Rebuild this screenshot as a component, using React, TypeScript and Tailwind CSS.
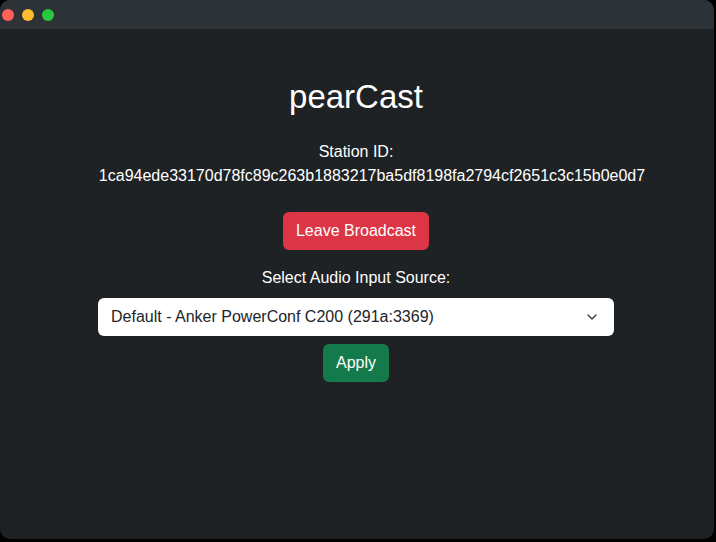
import { ChevronDown } from "lucide-react";

const stationId = "1ca94ede33170d78fc89c263b1883217ba5df8198fa2794cf2651c3c15b0e0d7";

const App = () => {
  return (
    <div className="w-[716px] h-[542px] bg-black font-['Liberation_Sans',Arial,sans-serif]">
      <div className="w-[714px] h-[539px] rounded-[10px] overflow-hidden bg-[#1f2225] flex flex-col">
        {/* title bar */}
        <div className="h-[29px] bg-[#2d3237] flex items-center gap-[8px] pl-[2px] shrink-0">
          <span className="w-[12px] h-[12px] rounded-full bg-[#fe5f57]" />
          <span className="w-[12px] h-[12px] rounded-full bg-[#febc2e]" />
          <span className="w-[12px] h-[12px] rounded-full bg-[#28c840]" />
        </div>

        <div className="flex flex-col items-center text-white pt-[49px] pr-[2px]">
          <h1 className="text-[33px] leading-[38px] mb-[24px]">pearCast</h1>
          <p className="text-[16px] leading-[24px]">Station ID:</p>
          <p className="text-[16px] leading-[24px] mb-[24px] ml-[32px]">{stationId}</p>

          <button className="h-[38px] px-[13px] rounded-[6px] bg-[#dc3545] text-white text-[16px] mb-[16px]">
            Leave Broadcast
          </button>

          <label className="text-[16px] leading-[24px] mb-[8px]">Select Audio Input Source:</label>
          <div className="w-[516px] h-[38px] rounded-[6px] bg-white flex items-center justify-between pl-[13px] pr-[14px] text-[#212529] text-[16px] mb-[8px]">
            <span>Default - Anker PowerConf C200 (291a:3369)</span>
            <ChevronDown size={16} strokeWidth={2} className="text-[#343a40]" />
          </div>

          <button className="h-[38px] px-[13px] rounded-[6px] bg-[#157a4b] text-white text-[16px]">
            Apply
          </button>
        </div>
      </div>
    </div>
  );
};

export default App;
